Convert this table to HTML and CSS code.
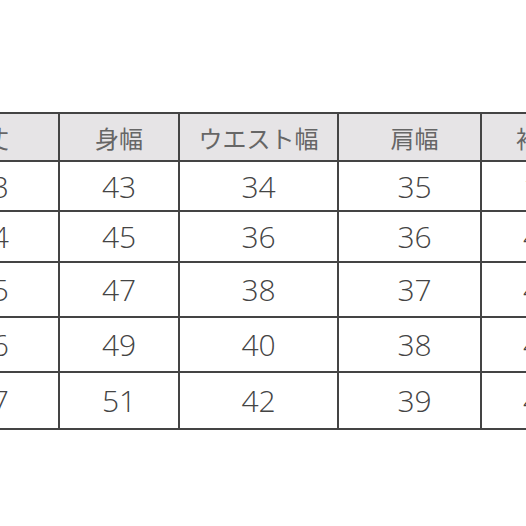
FILE: index.html
```html
<!DOCTYPE html>
<html lang="ja">
<head>
<meta charset="utf-8">
<link rel="stylesheet" href="styles.css">
</head>
<body>
<div class="frame">
<table class="size-table">
  <thead>
    <tr class="head-row">
      <th class="c1">着丈</th>
      <th class="c2">身幅</th>
      <th class="c3">ウエスト幅</th>
      <th class="c4">肩幅</th>
      <th class="c5">袖丈</th>
    </tr>
  </thead>
  <tbody>
    <tr class="r1"><td class="c1">63</td><td class="c2">43</td><td class="c3">34</td><td class="c4">35</td><td class="c5">17</td></tr>
    <tr class="r2"><td class="c1">64</td><td class="c2">45</td><td class="c3">36</td><td class="c4">36</td><td class="c5">47</td></tr>
    <tr class="r3"><td class="c1">65</td><td class="c2">47</td><td class="c3">38</td><td class="c4">37</td><td class="c5">48</td></tr>
    <tr class="r4"><td class="c1">66</td><td class="c2">49</td><td class="c3">40</td><td class="c4">38</td><td class="c5">49</td></tr>
    <tr class="r5"><td class="c1">67</td><td class="c2">51</td><td class="c3">42</td><td class="c4">39</td><td class="c5">40</td></tr>
  </tbody>
</table>
</div>
</body>
</html>
```
FILE: styles.css
```css
html, body {
  margin: 0;
  padding: 0;
  background: #ffffff;
}
.frame {
  width: 526px;
  height: 526px;
  overflow: hidden;
  padding-top: 112px;
  box-sizing: border-box;
}
.size-table {
  border-collapse: collapse;
  margin-left: -62px;
  table-layout: fixed;
  width: 660px;
  font-family: "Open Sans", "Noto Sans", "Noto Sans CJK JP", sans-serif;
  color: #444444;
}
.size-table th,
.size-table td {
  border: 2px solid #444444;
  padding: 0;
  text-align: center;
  white-space: nowrap;
  overflow: hidden;
}
.size-table th {
  background: #e6e4e6;
  font-family: "Noto Sans CJK JP", sans-serif;
  font-weight: 400;
  font-size: 24px;
  color: #666666;
}
.size-table td {
  font-size: 30px;
  font-weight: 300;
}
.head-row { height: 48px; }
.r1 { height: 50px; }
.r2 { height: 51px; }
.r3 { height: 55px; }
.r4 { height: 55px; }
.r5 { height: 57px; }
.size-table .c1 { width: 69px; text-align: right; padding-right: 49px; }
.size-table .c2 { width: 118px; }
.size-table .c3 { width: 157px; }
.size-table .c4 { width: 131px; padding-left: 10px; }
.size-table .c5 { width: 116px; }
```
